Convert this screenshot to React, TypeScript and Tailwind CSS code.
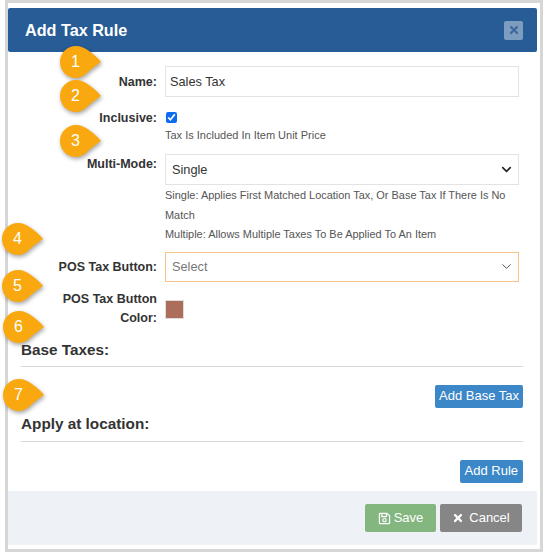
import React from 'react';
import { ChevronDown } from 'lucide-react';
import { FaRegSave, FaTimes } from 'react-icons/fa';

const badges = [
  { n: 1, cls: 'left-[59px] top-[45px]' },
  { n: 2, cls: 'left-[59px] top-[79px]' },
  { n: 3, cls: 'left-[59px] top-[124px]' },
  { n: 4, cls: 'left-[1px] top-[222px]' },
  { n: 5, cls: 'left-[1px] top-[269px]' },
  { n: 6, cls: 'left-[2px] top-[310px]' },
  { n: 7, cls: 'left-[2px] top-[378px]' },
];

const Badge = ({ n, cls }: { n: number; cls: string }) => (
  <div className={`absolute ${cls} h-[35px] w-[44px]`}>
    <svg width="44" height="36" viewBox="0 0 44 36" className="absolute left-0 top-0 drop-shadow-[1px_2px_2px_rgba(0,0,0,0.35)]">
      <path d="M17 1 C22 1 26 3 30 6 C34 9 38 12 42 17 C38 20 33 23 29 27 C25 31 21 33 17 33 C8 33 1 26 1 17 C1 8 8 1 17 1 Z" fill="#f9a90f" />
    </svg>
    <span className="absolute left-0 top-[6px] w-[33px] text-center text-[16px] leading-[22px] text-white">{n}</span>
  </div>
);

const Row = ({ label, children, className }: { label: React.ReactNode; children: React.ReactNode; className?: string }) => (
  <div className={`grid grid-cols-[149px_354px] gap-x-[8px] ${className ?? ''}`}>
    <label className="text-right text-[12.5px] font-bold leading-[19px] text-[#333]">{label}</label>
    <div>{children}</div>
  </div>
);

export default function App() {
  return (
    <div className="relative h-[552px] w-[543px] overflow-hidden bg-white font-['Liberation_Sans',Arial,sans-serif] text-[#333]">
      <div className="ml-[5px] h-[552px] w-[538px] border-[3px] border-[#d6d6d6] bg-white">
        <div className="flex h-[542px] w-[529px] flex-col pt-[5px]">
          <div className="flex h-[44px] items-center justify-between rounded-[2px] bg-[#285c97] pl-[17px] pr-[14px]">
            <h4 className="text-[16.2px] font-bold text-white">Add Tax Rule</h4>
            <button className="flex h-[19px] w-[19px] items-center justify-center rounded-[2px] bg-[#7c9cc0] text-[#3f6a9d]">
              <FaTimes size={12} />
            </button>
          </div>

          <div className="flex flex-1 flex-col">
            <Row label={<span className="block pt-[7px]">Name:</span>} className="mt-[14px]">
              <div className="flex h-[31px] items-center border border-[#e3e3e3] px-[4px] text-[12.75px]">Sales Tax</div>
            </Row>
            <Row label={<span className="block pt-[1px]">Inclusive:</span>} className="mt-[11px]">
              <div className="flex h-[18px] items-center pl-[1px]">
                <input type="checkbox" defaultChecked className="h-[11px] w-[11px] accent-[#0b6cf0]" />
              </div>
              <p className="mt-[1px] text-[11px] leading-[17px] text-[#555]">Tax Is Included In Item Unit Price</p>
            </Row>
            <Row label={<span className="block pt-[1px]">Multi-Mode:</span>} className="mt-[10px]">
              <div className="flex h-[31px] items-center justify-between border border-[#e3e3e3] pl-[6px] pr-[4px] text-[12.75px]">
                <span>Single</span>
                <ChevronDown size={15} strokeWidth={2.6} className="text-[#222]" />
              </div>
              <p className="mt-[1px] text-[10.95px] leading-[19.5px] text-[#555]">
                Single: Applies First Matched Location Tax, Or Base Tax If There Is No Match
              </p>
              <p className="text-[10.95px] leading-[19.5px] text-[#555]">Multiple: Allows Multiple Taxes To Be Applied To An Item</p>
            </Row>
            <Row label={<span className="block pt-[6px]">POS Tax Button:</span>} className="mt-[7px]">
              <div className="flex h-[30px] items-center justify-between border border-[#f9c48c] pl-[6px] pr-[4px] text-[12.75px] text-[#777]">
                <span>Select</span>
                <ChevronDown size={15} strokeWidth={1.6} className="text-[#555]" />
              </div>
            </Row>
            <Row label={<>POS Tax Button<br />Color:</>} className="mt-[8px]">
              <div className="mt-[10px] h-[19px] w-[19px] border border-[#ddd] bg-[#ac6e5a]" />
            </Row>

            <div className="ml-[13px] w-[502px]">
              <h4 className="mt-[12px] border-b border-[#d8d8d8] pb-[6px] text-[15.3px] font-bold leading-[20px] text-[#333]">Base Taxes:</h4>
              <div className="mt-[18px] flex justify-end">
                <button className="h-[23px] rounded-[2px] bg-[#3c87c8] px-[4px] text-[13px] text-white">Add Base Tax</button>
              </div>
              <h4 className="mt-[6px] border-b border-[#d8d8d8] pb-[7px] text-[15.3px] font-bold leading-[20px] text-[#333]">Apply at location:</h4>
              <div className="mt-[18px] flex justify-end">
                <button className="h-[23px] rounded-[2px] bg-[#3c87c8] px-[5px] text-[13px] text-white">Add Rule</button>
              </div>
            </div>

            <div className="mt-auto flex h-[54px] items-center justify-end gap-[4px] bg-[#eef1f6] pr-[15px]">
              <button className="flex h-[28px] w-[71px] items-center justify-center gap-[3px] rounded-[2px] bg-[#84b67f] text-[13px] text-white">
                <FaRegSave size={13} /> Save
              </button>
              <button className="flex h-[28px] w-[82px] items-center justify-center gap-[5px] rounded-[2px] bg-[#868686] text-[13px] text-white">
                <FaTimes size={12} /> Cancel
              </button>
            </div>
          </div>
        </div>
      </div>
      {badges.map((b) => (
        <Badge key={b.n} n={b.n} cls={b.cls} />
      ))}
    </div>
  );
}
